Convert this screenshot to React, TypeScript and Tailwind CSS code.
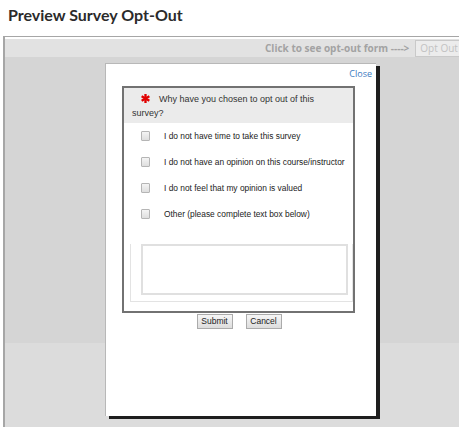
import React from 'react';

const reasons = [
  'I do not have time to take this survey',
  'I do not have an opinion on this course/instructor',
  'I do not feel that my opinion is valued',
  'Other (please complete text box below)',
];

function Asterisk() {
  return (
    <svg width="9" height="9" viewBox="0 0 10 10" className="inline-block align-[-1px]">
      <g stroke="#e00000" strokeWidth="2.6" strokeLinecap="butt">
        <line x1="5" y1="0" x2="5" y2="10" />
        <line x1="0.7" y1="2.5" x2="9.3" y2="7.5" />
        <line x1="0.7" y1="7.5" x2="9.3" y2="2.5" />
      </g>
    </svg>
  );
}

function Checkbox() {
  return (
    <span className="block w-[9px] h-[10px] border border-[#b5b5b5] rounded-[1px] bg-gradient-to-b from-[#f4f4f4] to-[#dedede]" />
  );
}

export default function App() {
  return (
    <div className="w-[459px] h-[427px] bg-white overflow-hidden font-['Liberation_Sans',Arial,sans-serif] text-[#333]">
      <h1 className="h-[36px] pl-[8px] pt-[3px] text-[16px] leading-[24px] font-bold text-[#2b2b2b] font-['Lato',sans-serif]">
        Preview Survey Opt-Out
      </h1>

      <div className="relative ml-[3px] h-[391px] border-l-2 border-t border-[#a6a6a6] flex flex-col">
        {/* top bar */}
        <div className="mt-[2px] h-[18px] bg-[#e2e2e2] flex items-center font-['Open_Sans',sans-serif] overflow-hidden">
          <span className="ml-[260px] text-[10px] font-bold text-[#a3a3a3] whitespace-nowrap">Click to see opt-out form ----&gt;</span>
          <span className="ml-[6px] shrink-0 h-[17px] w-[50px] border border-[#c9c9c9] bg-[#ececec] text-[10px] leading-[15px] pl-[4px] text-[#c2c2c2] whitespace-nowrap">
            Opt Out
          </span>
        </div>
        <div className="h-[286px] bg-[#d5d5d5]" />
        <div className="flex-1 bg-[#dcdcdc]" />

        {/* modal */}
        <div className="absolute left-[100px] top-[26px] w-[271px] h-[353px] bg-white border-l border-t border-[#b8b8b8] shadow-[4px_3px_0_#1e1e1e] flex flex-col">
          <div className="h-[22px] pr-[4px] pt-[4px] text-right text-[9px] leading-[12px] text-[#3d7cbf] font-['Open_Sans',sans-serif]">
            Close
          </div>

          <div className="ml-[16px] w-[233px] h-[227px] border-2 border-[#727272] flex flex-col">
            <div className="h-[35px] bg-[#ebebeb] pl-[8px] pr-[30px] pt-[4px] text-[9px] leading-[14px] text-[#333]">
              <span className="inline-block w-[9px]" />
              <Asterisk />
              <span className="inline-block w-[9px]" />
              Why have you chosen to opt out of this survey?
            </div>

            <div className="flex flex-col">
              {reasons.map(r => (
                <div key={r} className="h-[26px] flex items-center pl-[17px]">
                  <Checkbox />
                  <span className="ml-[14px] text-[8.4px] text-[#222]">{r}</span>
                </div>
              ))}
            </div>

            <div className="mt-[17px] ml-[6px] border-l border-r border-b border-[#e3e3e3] pl-[10px] pr-[4px] pb-[6px]">
              <div className="h-[51px] border-2 border-[#e0e0e0]" />
            </div>
          </div>

          <div className="mt-[1px] flex justify-center gap-[13px] pr-[4px]">
            <button className="w-[36px] h-[15px] border border-[#ababab] bg-gradient-to-b from-[#f6f6f6] to-[#dddddd] text-[8.5px] leading-[13px] text-[#222]">
              Submit
            </button>
            <button className="w-[36px] h-[15px] border border-[#ababab] bg-gradient-to-b from-[#f6f6f6] to-[#dddddd] text-[8.5px] leading-[13px] text-[#222]">
              Cancel
            </button>
          </div>
        </div>
      </div>
    </div>
  );
}
